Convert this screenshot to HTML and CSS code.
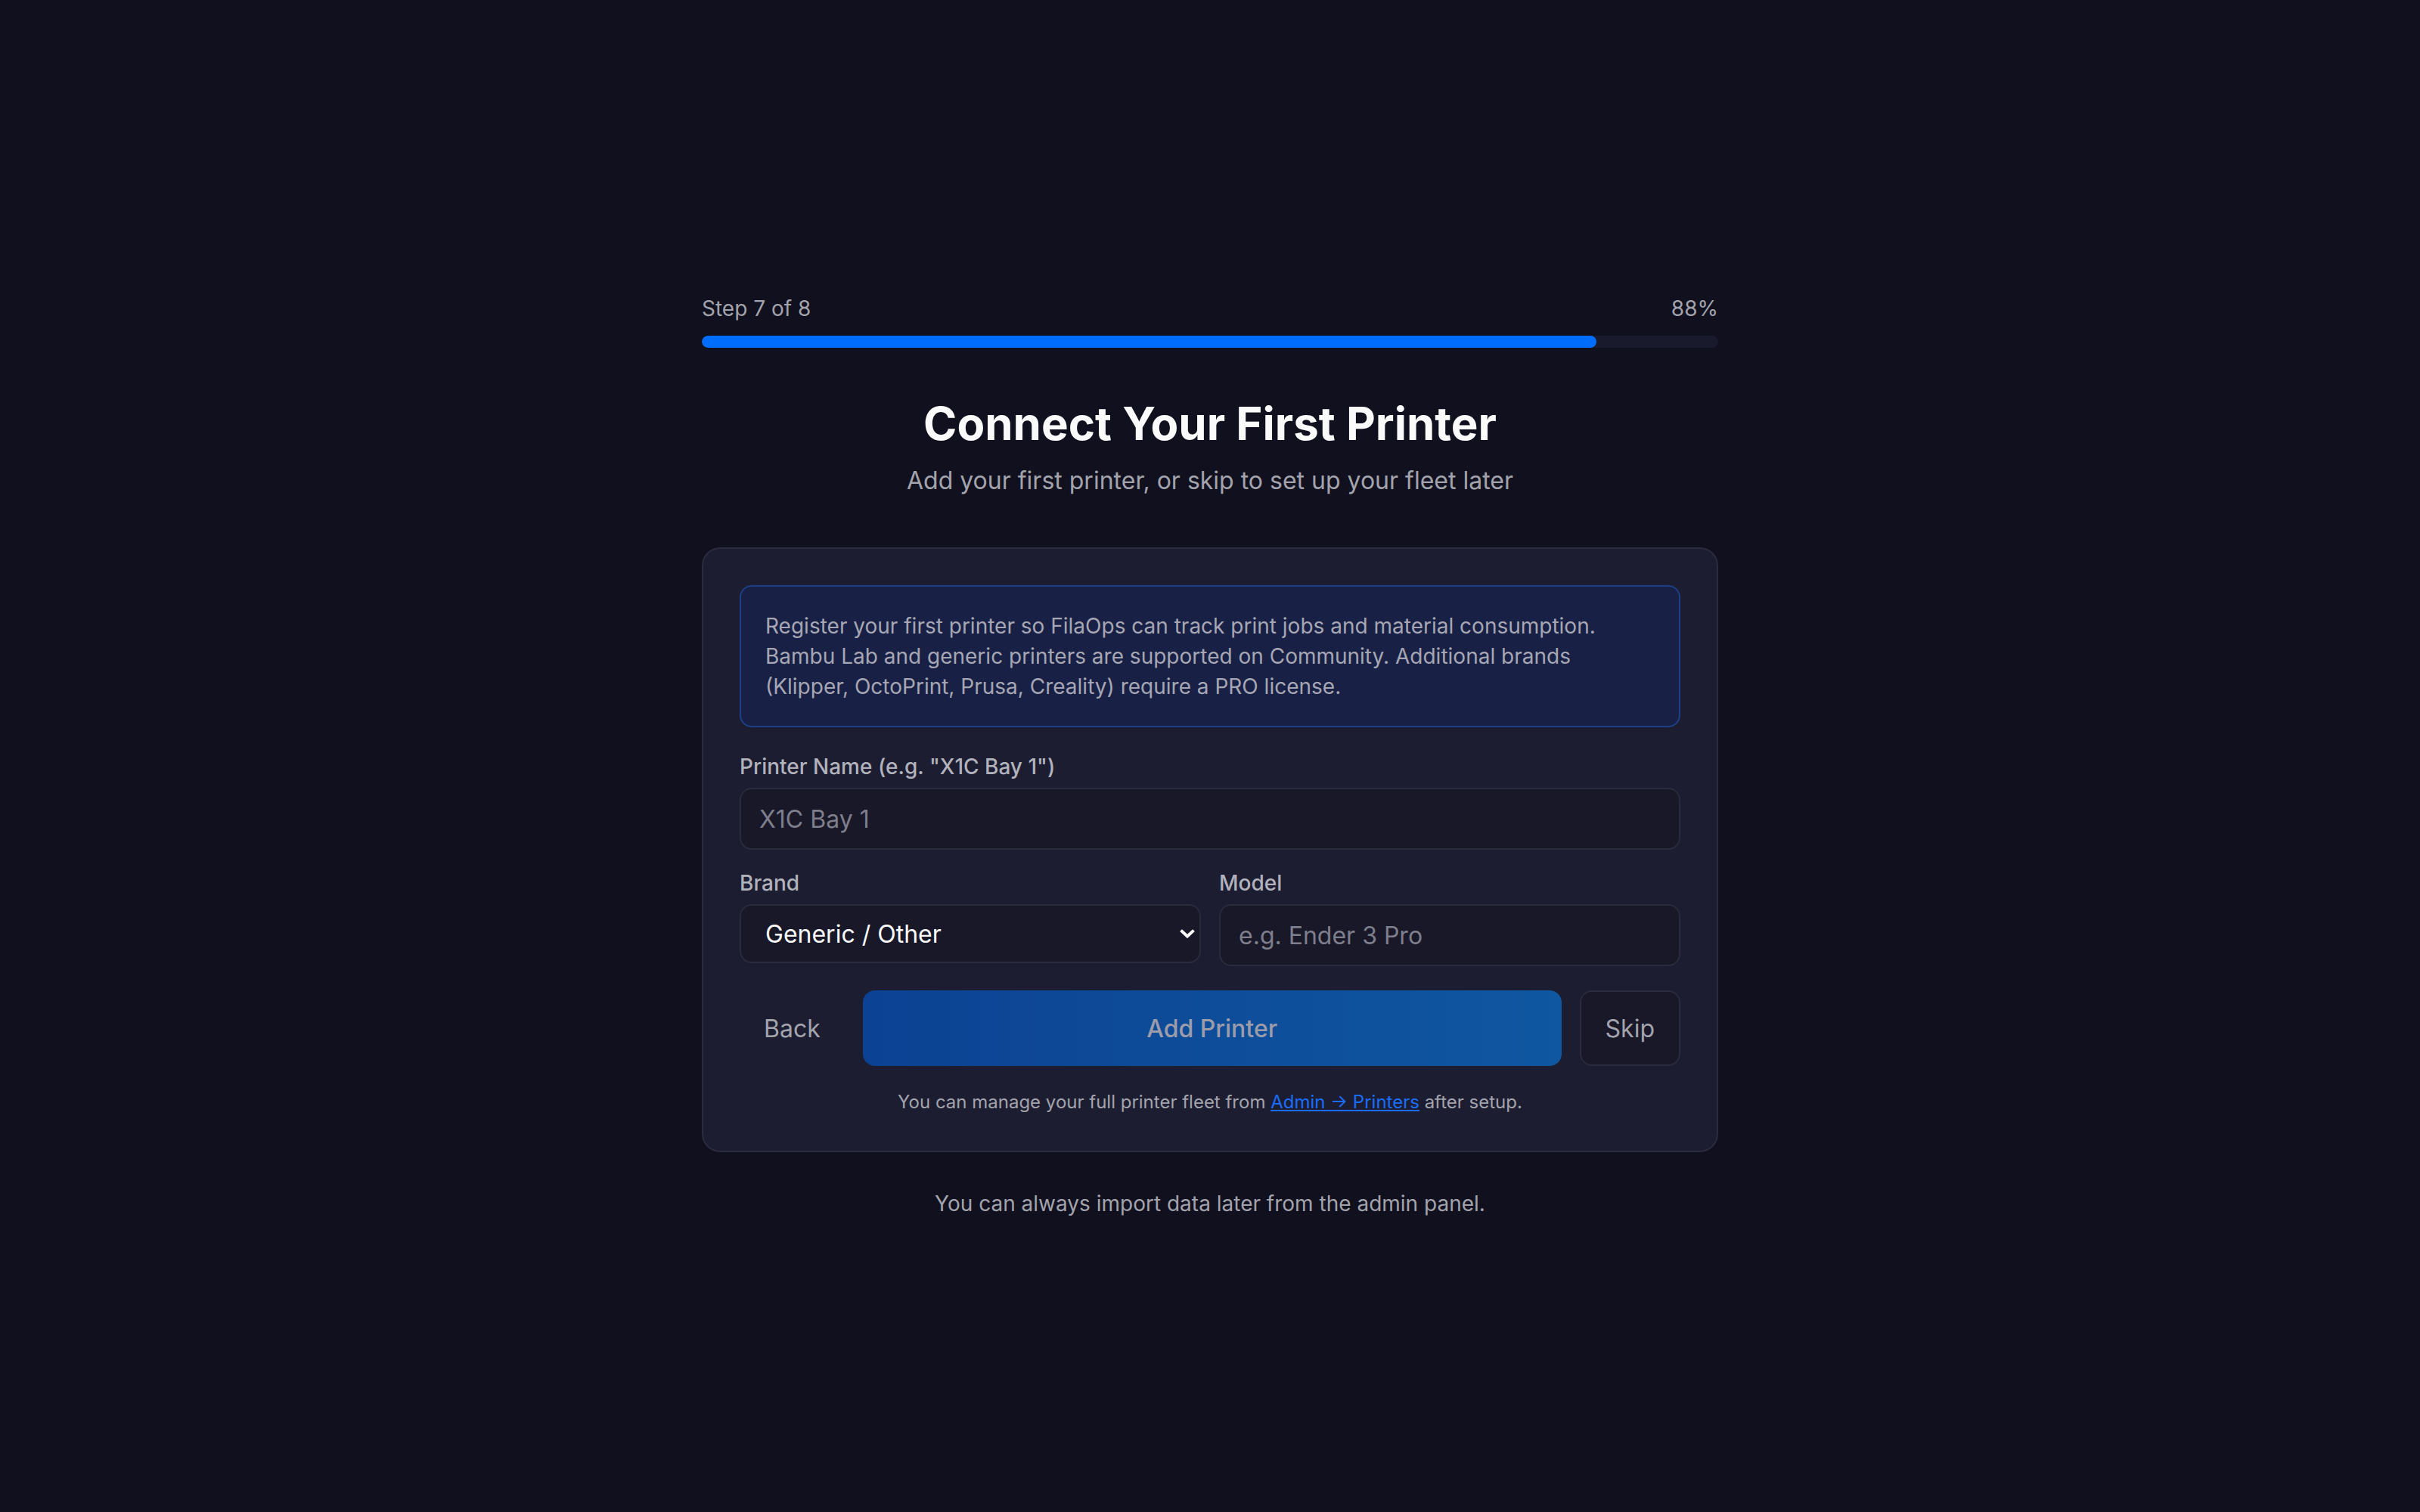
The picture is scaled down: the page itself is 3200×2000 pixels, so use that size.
FILE: index.html
```html
<!DOCTYPE html>
<html>
<head>
	<meta charset="UTF-8">
	<title>Setup - Connect Your First Printer</title>
	<link rel="stylesheet" href="styles.css">
</head>
<body>
<div class="page">
	<div class="wizard">
		<div class="progress">
			<div class="progress-text">
				<span>Step 7 of 8</span>
				<span>88%</span>
			</div>
			<div class="progress-track">
				<div class="progress-fill" style="width:88%"></div>
			</div>
		</div>

		<h1 class="title">Connect Your First Printer</h1>
		<p class="subtitle">Add your first printer, or skip to set up your fleet later</p>

		<div class="card">
			<div class="info">
				Register your first printer so FilaOps can track print jobs and material consumption.
				Bambu Lab and generic printers are supported on Community. Additional brands
				(Klipper, OctoPrint, Prusa, Creality) require a PRO license.
			</div>

			<div class="field">
				<label class="label">Printer Name (e.g. "X1C Bay 1")</label>
				<input class="input" type="text" placeholder="X1C Bay 1">
			</div>

			<div class="row">
				<div class="field">
					<label class="label">Brand</label>
					<div class="select-wrap">
						<select class="input select">
							<option>Generic / Other</option>
							<option>Bambu Lab</option>
						</select>
						<svg class="chevron" width="20" height="12" viewBox="0 0 20 12">
							<path d="M3 3 L10 9.5 L17 3" fill="none" stroke="#fff" stroke-width="4" stroke-linecap="square"/>
						</svg>
					</div>
				</div>
				<div class="field">
					<label class="label">Model</label>
					<input class="input" type="text" placeholder="e.g. Ender 3 Pro">
				</div>
			</div>

			<div class="actions">
				<button class="btn btn-back">Back</button>
				<button class="btn btn-primary" disabled>Add Printer</button>
				<button class="btn btn-skip">Skip</button>
			</div>

			<p class="note">You can manage your full printer fleet from <a href="#">Admin → Printers</a> after setup.</p>
		</div>

		<p class="footer">You can always import data later from the admin panel.</p>
	</div>
</div>
</body>
</html>
```

FILE: styles.css
```css
*{
	box-sizing: border-box;
}
body,p,h1{
	margin: 0;
	padding: 0;
}
body{
	background: #10101e;
	color: #a3a3ad;
	font-family: Inter, "Noto Sans", sans-serif;
}

.page{
	min-height: 100vh;
	display: flex;
	align-items: center;
	justify-content: center;
}
.wizard{
	width: 1344px;
}

/* progress */
.progress{
	margin-bottom: 64px;
}
.progress-text{
	display: flex;
	justify-content: space-between;
	font-size: 28px;
	line-height: 40px;
	color: #a3a3ad;
	margin-bottom: 16px;
}
.progress-track{
	height: 16px;
	border-radius: 8px;
	background: #191a2c;
	overflow: hidden;
}
.progress-fill{
	height: 100%;
	border-radius: 8px;
	background: #006dfc;
}

.title{
	text-align: center;
	font-size: 60px;
	line-height: 72px;
	font-weight: 700;
	color: #fafafa;
}
.subtitle{
	text-align: center;
	font-size: 32px;
	line-height: 48px;
	margin-top: 16px;
	margin-bottom: 64px;
	color: #a3a3ad;
}

/* card */
.card{
	background: #1c1d31;
	border: 2px solid #2a2b3d;
	border-radius: 24px;
	padding: 48px;
	display: flex;
	flex-direction: column;
	gap: 32px;
}
.info{
	background: #182145;
	border: 2px solid #1c3f86;
	border-radius: 16px;
	padding: 32px;
	font-size: 28px;
	line-height: 40px;
	color: #a6a6b4;
}

.field{
	display: flex;
	flex-direction: column;
	gap: 8px;
}
.label{
	font-size: 28px;
	line-height: 40px;
	font-weight: 500;
	color: #b2b2bd;
}
.input{
	width: 100%;
	height: 82px;
	background: #181828;
	border: 2px solid #2a2b3d;
	border-radius: 16px;
	padding: 0 24px;
	font-family: Inter, "Noto Sans", sans-serif;
	font-size: 32px;
	color: #fafafa;
	outline: none;
}
.input::placeholder{
	color: #7e7e8c;
}

/* select with its own arrow */
.select-wrap{
	position: relative;
}
.select{
	display: block;
	height: 78px;
	padding: 0 60px 0 32px;
	-webkit-appearance: none;
	appearance: none;
}
.chevron{
	position: absolute;
	right: 8px;
	top: 33px;
	pointer-events: none;
}

.row{
	display: grid;
	grid-template-columns: 1fr 1fr;
	gap: 24px;
	align-items: start;
	margin-top: -8px;
}

/* buttons */
.actions{
	display: flex;
	gap: 24px;
}
.btn{
	height: 100px;
	border-radius: 16px;
	font-family: Inter, "Noto Sans", sans-serif;
	font-size: 32px;
	font-weight: 500;
	color: #a3a3ad;
	padding: 0 32px;
	cursor: pointer;
}
.btn-back{
	background: none;
	border: none;
	font-weight: 400;
}
.btn-primary{
	flex: 1;
	border: none;
	background: linear-gradient(90deg, #0c4293, #0f57a0);
	color: #9c9cab;
}
.btn-skip{
	background: #181828;
	border: 2px solid #2a2b3d;
	font-weight: 400;
}

.note{
	text-align: center;
	font-size: 24px;
	line-height: 32px;
	color: #a3a3ad;
}
.note a{
	color: #1a6dfb;
	text-decoration: underline;
}

.footer{
	text-align: center;
	font-size: 28px;
	line-height: 40px;
	margin-top: 48px;
	color: #a3a3ad;
}
```
